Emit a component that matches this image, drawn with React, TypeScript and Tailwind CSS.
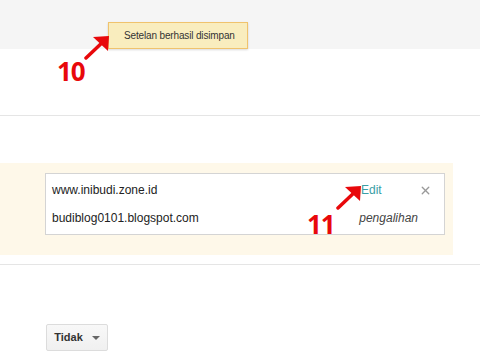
import { X } from "lucide-react"

function Arrow({ className }: { className: string }) {
  return (
    <svg className={className} width="28" height="26" viewBox="0 0 28 26">
      <line x1="2" y1="24" x2="22" y2="5" stroke="#e8080b" strokeWidth="3.5" strokeLinecap="round" />
      <path d="M9 3 L25 2 L24 17 Z" fill="#e8080b" />
    </svg>
  )
}

export default function App() {
  return (
    <div className="relative w-[480px] h-[360px] overflow-hidden bg-white font-['Liberation_Sans',Arial,sans-serif] text-[#222]">
      <div className="h-[49px] bg-[#f5f5f5]" />
      <div className="h-[67px] border-b border-[#e5e5e5]" />

      <div className="mt-[47px] w-[453px] h-[92px] bg-[#fef8e9] pl-[45px] pt-[10px]">
        <div className="w-[400px] h-[62px] border border-[#d4d4d4] bg-white flex flex-col px-[6px] pt-[7px] text-[12px] gap-[10px]">
          <div className="flex items-center h-[18px]">
            <span className="flex-1">www.inibudi.zone.id</span>
            <span className="text-[#3a9ea5] w-[58px]">Edit</span>
            <X className="w-[13px] h-[13px] text-[#999] mr-[6px]" strokeWidth={2.5} />
          </div>
          <div className="flex items-center h-[18px]">
            <span className="flex-1">budiblog0101.blogspot.com</span>
            <span className="italic text-[#444] mr-[20px]">pengalihan</span>
          </div>
        </div>
      </div>

      <div className="mt-[9px] border-b border-[#e5e5e5]" />

      <div className="mt-[59px] ml-[46px]">
        <button className="w-[62px] h-[27px] rounded-[2px] border border-[#dcdcdc] bg-gradient-to-b from-[#f8f8f8] to-[#f0f0f0] flex items-center justify-center gap-[9px] text-[11px] font-bold text-[#333]">
          Tidak
          <span className="w-0 h-0 border-l-[4px] border-r-[4px] border-t-[4px] border-l-transparent border-r-transparent border-t-[#666]" />
        </button>
      </div>

      <div className="absolute left-[108px] top-[22px] w-[140px] h-[27px] bg-[#f9edbe] border border-[#f0c36d] shadow-[0_1px_2px_rgba(0,0,0,0.15)] flex items-center pl-[15px] whitespace-nowrap text-[10px] tracking-[-0.15px] text-[#333]">
        Setelan berhasil disimpan
      </div>

      <Arrow className="absolute left-[84px] top-[34px]" />
      <span className="absolute left-[57px] top-[58px] text-[26px] font-bold text-[#e8080b] font-['Open_Sans',sans-serif] leading-none tracking-[-1px]">10</span>

      <Arrow className="absolute left-[336px] top-[184px]" />
      <span className="absolute left-[307px] top-[211px] text-[26px] font-bold text-[#e8080b] font-['Open_Sans',sans-serif] leading-none tracking-[-1px]">11</span>
    </div>
  )
}
